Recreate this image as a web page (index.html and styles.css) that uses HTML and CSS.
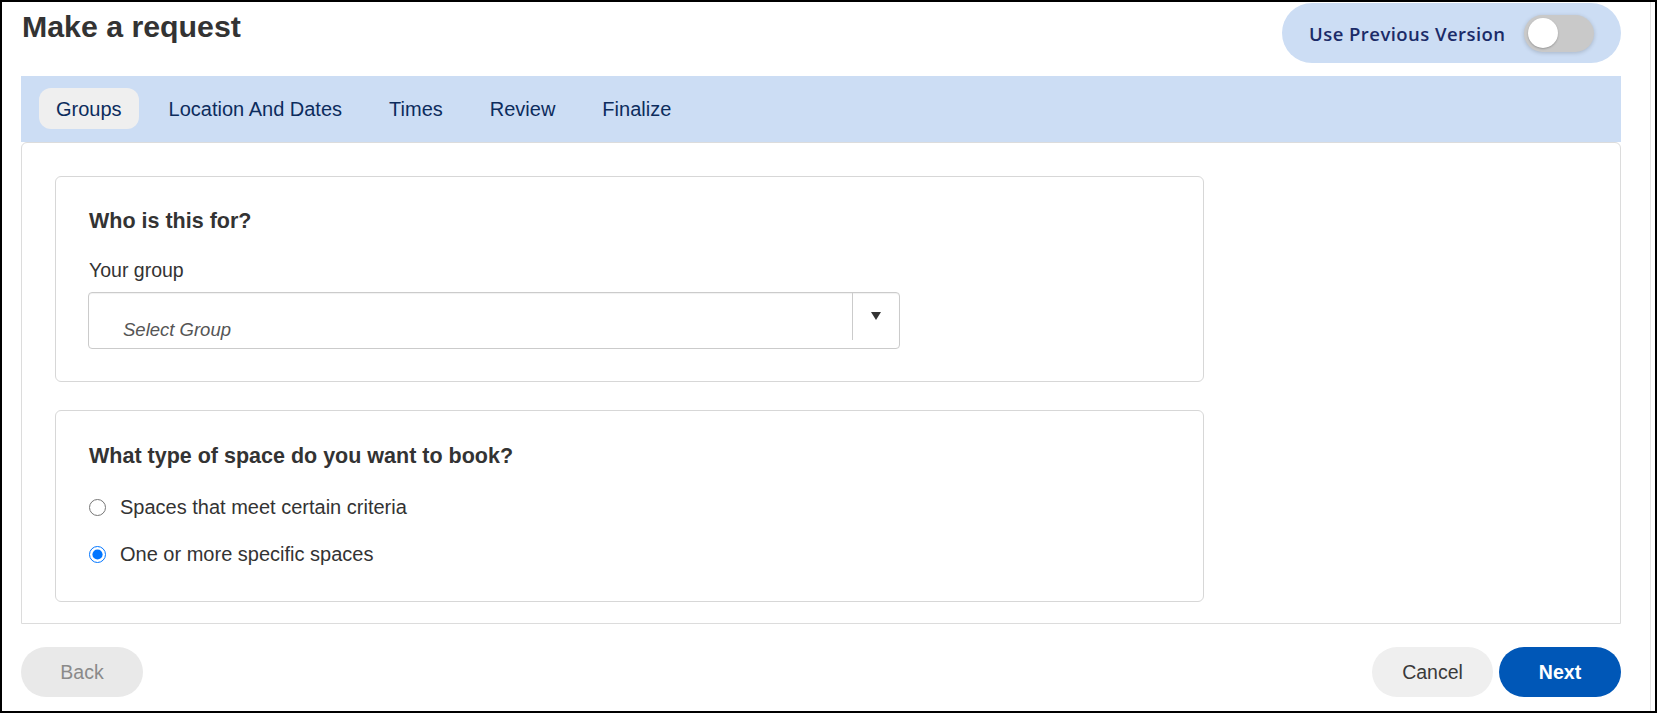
FILE: index.html
```html
<!DOCTYPE html>
<html lang="en">
<head>
<meta charset="utf-8">
<title>Make a request</title>
<link rel="stylesheet" href="styles.css">
</head>
<body>
<div class="frame">
  <div class="page">
    <header class="header">
      <h1 class="title">Make a request</h1>
      <div class="version-pill">
        <span class="version-label">Use Previous Version</span>
        <span class="switch"><span class="knob"></span></span>
      </div>
    </header>

    <nav class="tabs">
      <span class="tab active">Groups</span>
      <span class="tab">Location And Dates</span>
      <span class="tab">Times</span>
      <span class="tab">Review</span>
      <span class="tab">Finalize</span>
    </nav>

    <main class="panel">
      <section class="card card-group">
        <h2 class="card-title">Who is this for?</h2>
        <div class="field-label">Your group</div>
        <div class="select">
          <div class="select-value">Select Group</div>
          <div class="select-toggle"><span class="caret"></span></div>
        </div>
      </section>

      <section class="card card-space">
        <h2 class="card-title">What type of space do you want to book?</h2>
        <label class="radio-row">
          <input type="radio" name="space" class="radio">
          <span>Spaces that meet certain criteria</span>
        </label>
        <label class="radio-row">
          <input type="radio" name="space" class="radio" checked>
          <span>One or more specific spaces</span>
        </label>
      </section>
    </main>

    <footer class="footer">
      <button class="btn btn-back" type="button">Back</button>
      <div class="footer-right">
        <button class="btn btn-cancel" type="button">Cancel</button>
        <button class="btn btn-next" type="button">Next</button>
      </div>
    </footer>
  </div>
</div>
</body>
</html>
```

FILE: styles.css
```css
* { box-sizing: border-box; }

html, body {
  margin: 0;
  padding: 0;
  background: #fff;
}

body {
  font-family: "Liberation Sans", Arial, sans-serif;
  color: #333;
}

.frame {
  width: 1657px;
  height: 713px;
  border: 2px solid #000;
  overflow: hidden;
}

.page {
  width: 1649px;
  height: 100%;
  border-right: 1px solid #e4e4e4;
  padding: 0 29px 0 19px;
}

.header {
  height: 74px;
  display: flex;
  justify-content: space-between;
  align-items: flex-start;
}

.title {
  margin: 0;
  padding: 7px 0 0 1px;
  font-size: 30.3px;
  line-height: 36px;
  font-weight: bold;
  color: #333;
}

.version-pill {
  margin-top: 1px;
  width: 339px;
  height: 60px;
  border-radius: 30px;
  background: #ccddf4;
  display: flex;
  align-items: center;
  justify-content: space-between;
  padding: 0 27px;
}

.version-label {
  font-family: "Segoe UI", "Open Sans", sans-serif;
  font-weight: 600;
  font-size: 18.5px;
  letter-spacing: 0.45px;
  color: #1b2b68;
  white-space: nowrap;
}

.switch {
  width: 70px;
  height: 37px;
  border-radius: 19px;
  background: #c9c9c9;
  box-shadow: 0 1px 4px rgba(0, 0, 0, 0.18);
  display: flex;
  align-items: center;
  padding: 0 4px;
}

.knob {
  width: 30px;
  height: 30px;
  border-radius: 50%;
  background: #fff;
  box-shadow: 0 1px 2px rgba(0, 0, 0, 0.25);
}

.tabs {
  height: 66px;
  background: #ccddf4;
  display: flex;
  gap: 13px;
  padding: 12px 18px 13px;
}

.tab {
  height: 41px;
  line-height: 42px;
  padding: 0 17px;
  border-radius: 12px;
  font-size: 20px;
  color: #0c2c5d;
  white-space: nowrap;
}

.tab.active {
  background: #efefef;
}

.panel {
  height: 482px;
  border: 1px solid #dcdcdc;
  border-radius: 6px 6px 0 0;
  padding: 33px 33px 21px;
  display: flex;
  flex-direction: column;
  gap: 28px;
}

.card {
  width: 1149px;
  border: 1px solid #d7d7d7;
  border-radius: 6px;
  padding: 31px 33px;
}

.card-group {
  height: 206px;
}

.card-space {
  height: 192px;
  padding: 32px 33px 23px;
}

.card-title {
  margin: 0;
  font-size: 21.5px;
  line-height: 26px;
  font-weight: bold;
  color: #333;
}

.field-label {
  margin-top: 24px;
  font-size: 19.5px;
  line-height: 24px;
  color: #333;
}

.select {
  margin-top: 10px;
  margin-left: -1px;
  width: 812px;
  height: 57px;
  border: 1px solid #cbcbcb;
  border-radius: 4px;
  box-shadow: inset 0 1px 1px rgba(0, 0, 0, 0.06);
  display: flex;
}

.select-value {
  flex: 1;
  display: flex;
  align-items: flex-end;
  padding: 0 0 7px 34px;
  font-size: 18.5px;
  line-height: 22px;
  font-style: italic;
  color: #555;
}

.select-toggle {
  width: 47px;
  height: 47px;
  border-left: 1px solid #cbcbcb;
  display: flex;
  align-items: center;
  justify-content: center;
}

.caret {
  width: 0;
  height: 0;
  border-left: 5.5px solid transparent;
  border-right: 5.5px solid transparent;
  border-top: 8px solid #333;
  margin-top: -1px;
}

.card-space .card-title {
  margin-bottom: 15px;
}

.radio-row {
  height: 47px;
  display: flex;
  align-items: center;
  gap: 14px;
  font-size: 20px;
  color: #333;
}

.radio {
  width: 17px;
  height: 17px;
  margin: 0;
}

.footer {
  margin-top: 23px;
  display: flex;
  justify-content: space-between;
  align-items: center;
}

.footer-right {
  display: flex;
  gap: 6px;
}

.btn {
  height: 50px;
  border: none;
  border-radius: 25px;
  font-family: "Liberation Sans", Arial, sans-serif;
  font-size: 19.5px;
  padding: 0;
  cursor: pointer;
}

.btn-back {
  width: 122px;
  background: #e9e9e9;
  color: #8a8a8a;
}

.btn-cancel {
  width: 121px;
  background: #efefef;
  color: #3a3a3a;
}

.btn-next {
  width: 122px;
  background: #0057b7;
  color: #fff;
  font-weight: bold;
}
```
